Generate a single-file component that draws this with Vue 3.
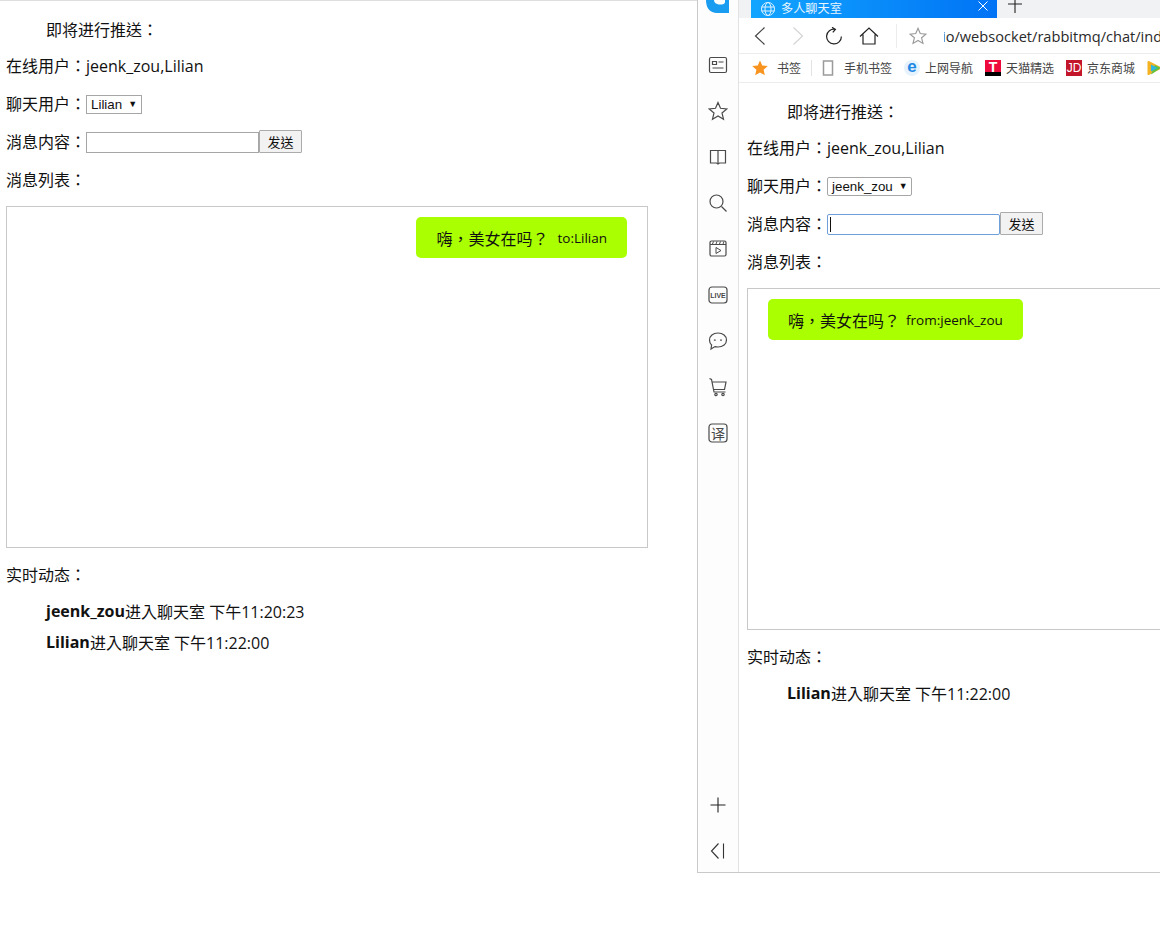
<script setup>
const stroke = '#4a4a4a'
const sideIcons = ['card', 'star', 'book', 'search', 'video', 'live', 'chat', 'cart', 'translate']
const bookmarks = [
  { id: 'phone', label: '手机书签' },
  { id: 'ie', label: '上网导航' },
  { id: 'tmall', label: '天猫精选' },
  { id: 'jd', label: '京东商城' },
]
</script>

<template>
  <div class="desktop">
    <main class="page left-page">
      <p class="row notice">即将进行推送：</p>
      <p class="row online">在线用户：jeenk_zou,Lilian</p>
      <div class="row">
        聊天用户：<span class="select lilian">Lilian<i class="caret">▼</i></span>
      </div>
      <div class="row">
        消息内容：<span class="controls"><span class="input"></span><span class="btn">发送</span></span>
      </div>
      <p class="row">消息列表：</p>
      <div class="list to-right">
        <div class="bubble">嗨，美女在吗？<small>to:Lilian</small></div>
      </div>
      <p class="row live-title">实时动态：</p>
      <p class="event first"><b>jeenk_zou</b>进入聊天室 下午11:20:23</p>
      <p class="event"><b>Lilian</b>进入聊天室 下午11:22:00</p>
    </main>

    <section class="window">
      <aside class="sidebar">
        <svg class="logo" width="26" height="14" viewBox="0 0 26 14">
          <path d="M1 0c0 8 4 13 11 13h12V0h-4v2c0 2-2 2.500-5 2.500S9 3 9 0z" fill="#1a9cf0" />
        </svg>
        <div class="side-icons">
          <svg v-for="name in sideIcons" :key="name" class="side-icon" width="20" height="20" viewBox="0 0 20 20" fill="none" :stroke="stroke" stroke-width="1.2">
            <template v-if="name === 'card'">
              <rect x="1.500" y="2.500" width="17" height="15" rx="1.500" />
              <path d="M4.500 6.500h4v3h-4zM10.500 7h5M4.500 13h11" />
            </template>
            <path v-else-if="name === 'star'" d="M10 1.500l2.500 5.800 6.300.6-4.800 4.100 1.500 6.200-5.500-3.300-5.500 3.300 1.500-6.200L1.200 7.900l6.300-.6z" />
            <path v-else-if="name === 'book'" d="M2.500 3.500h15v12.500h-6l-1.500 1-1.500-1h-6zM10 3.500v12.500" />
            <template v-else-if="name === 'search'">
              <circle cx="8.500" cy="8.500" r="6.500" />
              <path d="M13.500 13.500l5 5" />
            </template>
            <template v-else-if="name === 'video'">
              <rect x="2" y="2" width="16" height="15" rx="1.500" />
              <path d="M2 5.500h16M5.500 2.500l-1 2.500M9 2.500l-1 2.500M12.500 2.500l-1 2.500M16 2.500l-1 2.500M8 8.500l5 3-5 3z" stroke-width="1" />
            </template>
            <template v-else-if="name === 'live'">
              <rect x="1" y="2" width="18" height="16" rx="3" />
              <text x="10" y="12.800" text-anchor="middle" class="live-text">LIVE</text>
            </template>
            <template v-else-if="name === 'chat'">
              <path d="M10 2c5 0 8.500 3 8.500 7s-3.500 7-8.500 7c-1 0-2-.1-3-.4L3 18l.6-4C2.300 12.800 1.500 11 1.500 9c0-4 3.500-7 8.500-7z" />
              <path d="M6.800 8.500v1.200M13 8.500v1.200" stroke-width="1.800" />
            </template>
            <template v-else-if="name === 'cart'">
              <path d="M1.500 1.500l2 1 2.500 12.500h11.500M4.500 5h13.500l-1.500 7.500H6" />
              <circle cx="8" cy="17.500" r="1.200" />
              <circle cx="15" cy="17.500" r="1.200" />
            </template>
            <template v-else>
              <rect x="1" y="1" width="18" height="18" rx="3" />
              <text x="10" y="15.500" text-anchor="middle" class="yi-text">译</text>
            </template>
          </svg>
        </div>
        <div class="side-bottom">
          <svg width="16" height="16" viewBox="0 0 16 16" fill="none" stroke="#222" stroke-width="1.100">
            <path d="M8 .5v15M.5 8h15" />
          </svg>
          <svg width="16" height="16" viewBox="0 0 16 16" fill="none" stroke="#333" stroke-width="1.100">
            <path d="M8.500 .5L1.500 8l7 7.500M13.500 .5v15" />
          </svg>
        </div>
      </aside>

      <div class="browser">
        <header class="tabstrip">
          <div class="tab">
            <svg width="16" height="16" viewBox="0 0 16 16" fill="none" stroke="#dff1ff" stroke-width="1">
              <circle cx="8" cy="8" r="6.500" />
              <ellipse cx="8" cy="8" rx="3" ry="6.500" />
              <path d="M1.500 6h13M1.500 10h13" />
            </svg>
            <span class="tab-title">多人聊天室</span>
            <svg class="tab-close" width="10" height="10" viewBox="0 0 10 10" stroke="#fff" stroke-width="1">
              <path d="M.5 .5l9 9M9.500 .5l-9 9" />
            </svg>
          </div>
          <svg class="tab-plus" width="14" height="14" viewBox="0 0 14 14" stroke="#222" stroke-width="1.100">
            <path d="M7 0v14M0 5h14" />
          </svg>
        </header>

        <div class="toolbar">
          <svg class="tool back" width="12" height="18" viewBox="0 0 12 18" fill="none" stroke="#444" stroke-width="1.200">
            <path d="M10.500 .5L1.500 9l9 8.500" />
          </svg>
          <svg class="tool forward" width="12" height="18" viewBox="0 0 12 18" fill="none" stroke="#d4d4d4" stroke-width="1.200">
            <path d="M1.500 .5l9 8.500-9 8.500" />
          </svg>
          <svg class="tool reload" width="18" height="18" viewBox="0 0 18 18" fill="none" stroke="#222" stroke-width="1.200">
            <path d="M10 2.200A7.400 7.400 0 1 0 16.400 9.500M7 .3l3.400 2.100-2.600 3" />
          </svg>
          <svg class="tool home" width="20" height="18" viewBox="0 0 20 18" fill="none" stroke="#222" stroke-width="1.200">
            <path d="M1 9.500L10 1l9 8.500M4 7.500V17h12V7.500" />
          </svg>
          <span class="tool-sep"></span>
          <svg class="tool fav" width="18" height="18" viewBox="0 0 20 20" fill="none" stroke="#9a9a9a" stroke-width="1.300">
            <path d="M10 1.500l2.500 5.800 6.300.6-4.800 4.100 1.500 6.200-5.500-3.300-5.500 3.300 1.500-6.200L1.200 7.900l6.300-.6z" />
          </svg>
          <span class="url"><span class="url-text">io/websocket/rabbitmq/chat/index</span></span>
        </div>

        <nav class="bookmarks">
          <svg class="bm-star" width="16" height="16" viewBox="0 0 20 20">
            <path d="M10 .5l2.800 6.400 6.900.7-5.200 4.600 1.500 6.800-6-3.500-6 3.500 1.500-6.800L.3 7.600l6.900-.7z" fill="#f7931e" />
          </svg>
          <span class="bm-label first-label">书签</span>
          <span class="bm-sep"></span>
          <template v-for="b in bookmarks" :key="b.id">
            <span class="bm-item" :class="b.id">
              <svg v-if="b.id === 'phone'" width="16" height="16" viewBox="0 0 16 16" fill="none" stroke="#9a9a9a" stroke-width="1.500">
                <rect x="3.500" y="1" width="9" height="14" />
              </svg>
              <span v-else-if="b.id === 'ie'" class="fav-icon ie-icon">e</span>
              <span v-else-if="b.id === 'tmall'" class="fav-icon tmall-icon">T</span>
              <span v-else class="fav-icon jd-icon">JD</span>
              <span class="bm-label">{{ b.label }}</span>
            </span>
          </template>
          <svg class="bm-last" width="16" height="16" viewBox="0 0 16 16" stroke-linejoin="round">
            <path d="M2.500 2L14.500 8 2.500 14z" fill="#f5b324" stroke="#f5b324" stroke-width="2" />
            <path d="M5 14.500L14.800 8 9 5z" fill="#62c23f" />
            <path d="M5 4.500l6.500 3.500L5 11.500z" fill="#2fb7e0" />
          </svg>
        </nav>

        <div class="page right-page">
          <p class="row notice">即将进行推送：</p>
          <p class="row online">在线用户：jeenk_zou,Lilian</p>
          <div class="row">
            聊天用户：<span class="select jeenk">jeenk_zou<i class="caret">▼</i></span>
          </div>
          <div class="row">
            消息内容：<span class="controls"><span class="input focused"><i class="cursor"></i></span><span class="btn">发送</span></span>
          </div>
          <p class="row">消息列表：</p>
          <div class="list">
            <div class="bubble">嗨，美女在吗？<small>from:jeenk_zou</small></div>
          </div>
          <p class="row live-title">实时动态：</p>
          <p class="event first"><b>Lilian</b>进入聊天室 下午11:22:00</p>
        </div>
      </div>
    </section>
  </div>
</template>

<style>
html, body { margin: 0; background: #fff; }
</style>

<style scoped>
.desktop {
  position: relative;
  width: 1160px;
  height: 938px;
  overflow: hidden;
  background: #fff;
  font-family: "Open Sans", "Noto Sans CJK TC", sans-serif;
  color: #111;
}
.page { font-size: 16px; }
.left-page {
  width: 697px;
  box-sizing: border-box;
  height: 100%;
  border-top: 1px solid #dedede;
  padding: 11px 0 0 6px;
}
.right-page {
  width: 480px;
  padding: 11px 0 0 8px;
  box-sizing: border-box;
}
.row {
  margin: 0;
  height: 38px;
  box-sizing: border-box;
  padding-bottom: 2px;
  display: flex;
  align-items: center;
  white-space: nowrap;
  font-size: 16px;
}
.notice { padding-left: 40px; height: 36px; }
.online { height: 37px; padding-bottom: 4px; }
.select {
  box-sizing: border-box;
  height: 19px;
  margin-top: 3px;
  display: inline-flex;
  align-items: center;
  border: 1px solid #a6a6a6;
  font-size: 13.330px;
  padding-left: 4px;
  font-family: "Liberation Sans", "Noto Sans CJK TC", sans-serif;
}
.right-page .select { border-radius: 2px; }
.lilian { width: 56px; }
.jeenk { width: 85px; }
.caret {
  font-style: normal;
  font-size: 9px;
  margin-left: 6px;
  position: relative;
  top: -1px;
}
.controls {
  display: inline-flex;
  align-items: flex-end;
  margin-top: 1px;
}
.input {
  box-sizing: border-box;
  display: inline-flex;
  align-items: center;
  width: 173px;
  height: 21px;
  border: 1px solid #a6a6a6;
}
.focused {
  border-color: #6f9fd8;
  border-radius: 2px;
  padding-left: 2px;
}
.cursor { width: 1px; height: 15px; background: #111; }
.btn {
  box-sizing: border-box;
  display: inline-flex;
  align-items: center;
  justify-content: center;
  width: 43px;
  height: 23px;
  border: 1px solid #ababab;
  background: #f2f2f2;
  border-radius: 1px;
  font-size: 13px;
}
.list {
  box-sizing: border-box;
  width: 642px;
  height: 342px;
  margin-top: 7px;
  border: 1px solid #c8c8c8;
  padding: 10px 20px;
  display: flex;
  justify-content: flex-start;
  align-items: flex-start;
}
.to-right { justify-content: flex-end; }
.bubble {
  height: 41px;
  box-sizing: border-box;
  padding: 0 20px;
  display: flex;
  align-items: center;
  background: #aaff00;
  border-radius: 5px;
  font-size: 16px;
  white-space: nowrap;
}
.bubble small { font-size: 13.500px; margin-left: 9px; }
.right-page .bubble small { margin-left: 6px; }
.live-title { margin-top: 8px; }
.event {
  margin: 0 0 0 40px;
  height: 31px;
  box-sizing: border-box;
  padding-bottom: 2px;
  display: flex;
  align-items: center;
  white-space: pre;
  font-size: 16px;
}
.event.first { margin-top: 2px; }
.event b { font-weight: 700; }

.window {
  position: absolute;
  left: 697px;
  top: 0;
  width: 470px;
  height: 873px;
  box-sizing: border-box;
  display: flex;
  background: #fff;
  border-left: 1px solid #c9c9c9;
  border-bottom: 1px solid #c9c9c9;
}
.sidebar {
  flex: 0 0 41px;
  box-sizing: border-box;
  border-right: 1px solid #e2e2e2;
  display: flex;
  flex-direction: column;
  align-items: center;
  background: #fdfdfd;
}
.logo { margin-bottom: 41px; }
.side-icons {
  display: flex;
  flex-direction: column;
  align-items: center;
  gap: 26px;
}
.live-text {
  font: 700 7px "Liberation Sans", sans-serif;
  fill: #4a4a4a;
  stroke: none;
}
.yi-text {
  font: 400 14px "Noto Sans CJK SC", sans-serif;
  fill: #4a4a4a;
  stroke: none;
}
.side-bottom {
  margin-top: auto;
  margin-bottom: 13px;
  display: flex;
  flex-direction: column;
  gap: 30px;
}
.browser { flex: 1; min-width: 0; display: flex; flex-direction: column; }
.tabstrip {
  height: 18px;
  background: #f1f2f4;
  display: flex;
  align-items: flex-start;
  padding-left: 12px;
  overflow: hidden;
}
.tab {
  width: 246px;
  height: 18px;
  background: linear-gradient(90deg, #12a5ff, #0073f5);
  color: #e8f6ff;
  display: flex;
  align-items: center;
  padding-left: 9px;
  box-sizing: border-box;
  font-size: 12.200px;
}
.tab-title { margin-left: 5px; margin-top: -2px; }
.tab-close { margin-left: auto; margin-right: 9px; margin-top: -6px; }
.tab-plus { margin-left: 11px; margin-top: -1px; }
.toolbar {
  height: 36px;
  box-sizing: border-box;
  border-bottom: 1px solid #ececec;
  display: flex;
  align-items: center;
  padding-left: 15px;
}
.forward { margin-left: 26px; }
.reload { margin-left: 21px; }
.home { margin-left: 16px; }
.tool-sep { width: 1px; height: 24px; background: #ececec; margin-left: 17px; }
.fav { margin-left: 12px; }
.url {
  margin-left: 17px;
  flex: 0 0 217px;
  overflow: hidden;
  font-size: 14.600px;
  color: #2a2a2a;
  white-space: nowrap;
}
.url-text { display: inline-block; margin-left: -2px; }
.bookmarks {
  height: 29px;
  box-sizing: border-box;
  border-bottom: 1px solid #ececec;
  display: flex;
  align-items: center;
  padding-left: 13px;
  font-size: 12px;
  color: #444;
  white-space: nowrap;
}
.bm-label { display: inline-block; }
.first-label { margin-left: 9px; }
.bm-sep { width: 1px; height: 16px; background: #e2e2e2; margin: 0 8px 0 10px; }
.bm-item { display: inline-flex; align-items: center; gap: 5px; }
.bm-item.phone { gap: 8px; }
.bm-item + .bm-item { margin-left: 12px; }
.fav-icon {
  width: 16px;
  height: 16px;
  display: inline-flex;
  align-items: center;
  justify-content: center;
  font: 700 12px "Liberation Sans", sans-serif;
  color: #fff;
}
.ie-icon { color: #1e88e5; font-size: 17px; background: #e6f3fc; border-radius: 50%; padding-bottom: 2px; box-sizing: border-box; }
.tmall-icon {
  background: linear-gradient(#ee0a3c 75%, #000 75%);
  font-size: 14px;
  padding-bottom: 3px;
  box-sizing: border-box;
}
.jd-icon { background: #c4162a; font-size: 12px; font-weight: 400; }
.bm-last { margin-left: 11px; flex: none; }
</style>
